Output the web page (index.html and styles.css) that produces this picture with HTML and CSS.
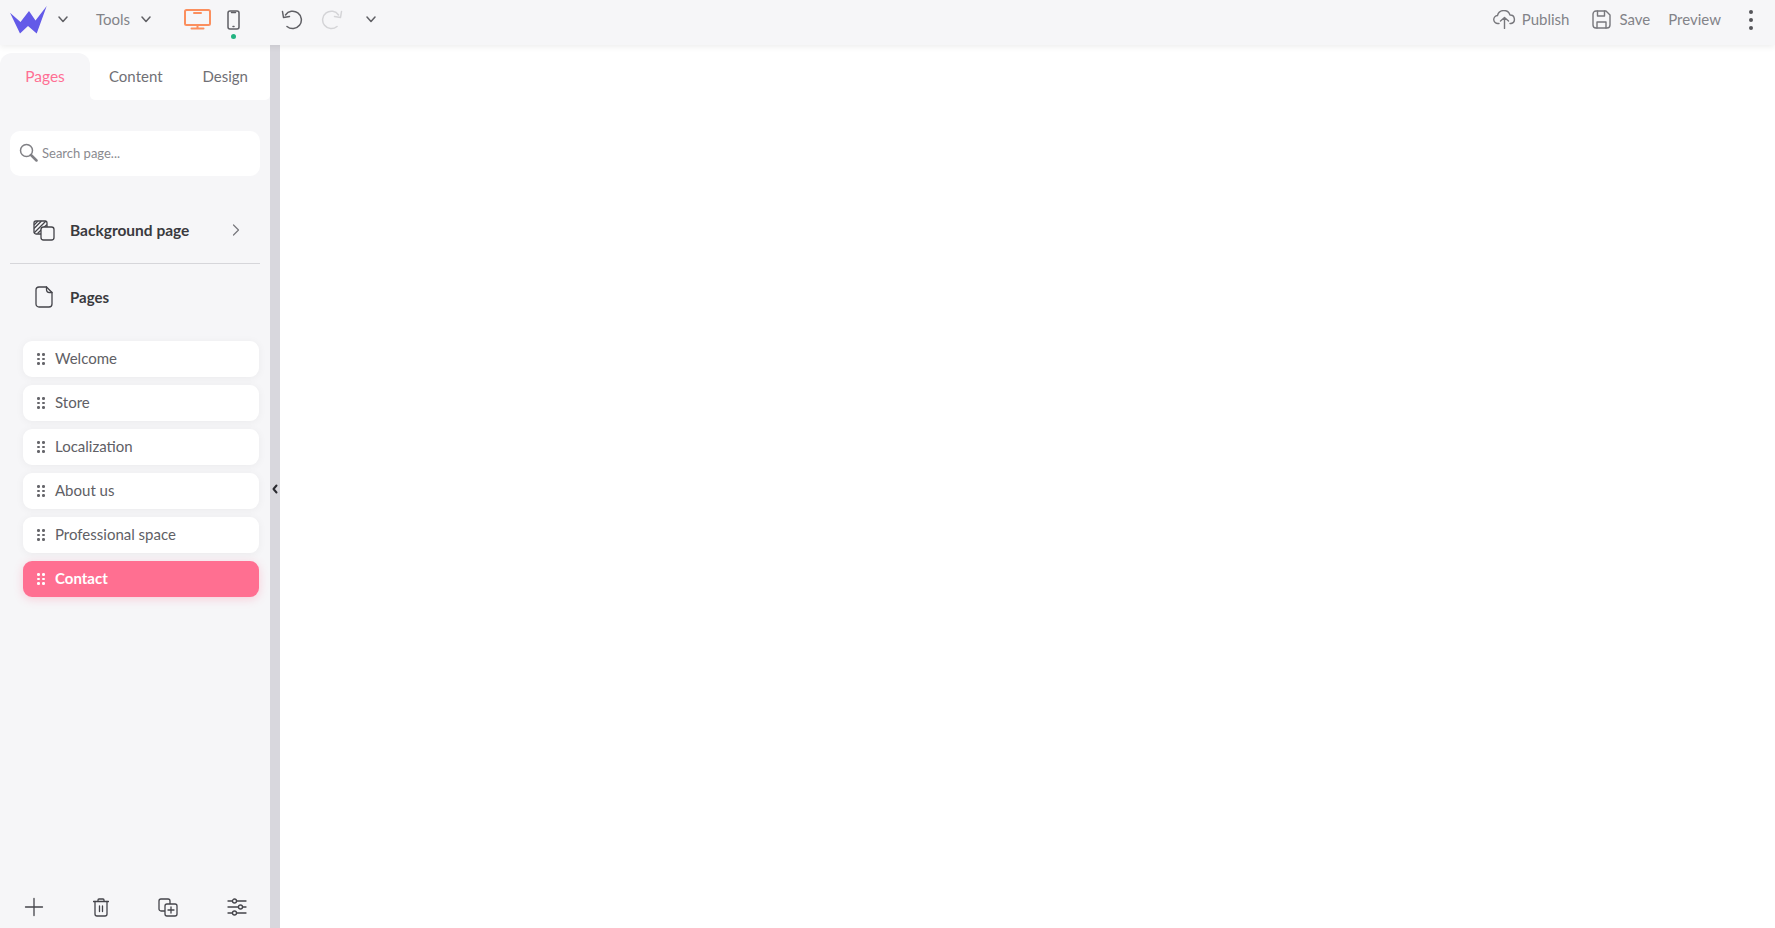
FILE: index.html
```html
<!DOCTYPE html>
<html lang="en">
<head>
<meta charset="utf-8">
<title>Editor</title>
<link rel="stylesheet" href="styles.css">
</head>
<body>
<header class="topbar">
  <div class="brand">
    <svg class="logo" width="38" height="28" viewBox="0 0 38 28"><path class="logo-fill" d="M0 6.700 L10.500 16 L19 5 L25.500 14.500 L36.700 0 L26.700 27.500 L18 20 L10 27.500 Z"/></svg>
    <svg class="chev" width="10" height="7" viewBox="0 0 10 7"><path d="M1 1 L5 5.500 L9 1"/></svg>
  </div>
  <div class="tools"><span class="bar-text">Tools</span><svg class="chev" width="10" height="7" viewBox="0 0 10 7"><path d="M1 1 L5 5.500 L9 1"/></svg></div>
  <div class="devices">
    <svg class="ic-desktop" width="27" height="21" viewBox="0 0 27 21"><rect x="1" y="1" width="25" height="15" rx="1.500"/><path d="M10 4h7M13.500 16v3.500M7.500 19.500h12"/></svg>
    <div class="phone">
      <svg class="ic-phone" width="13" height="20" viewBox="0 0 13 20"><rect x="1" y="1" width="11" height="18" rx="2"/><path d="M4.500 2.500h4M6 16.500h1"/></svg>
      <span class="dot"></span>
    </div>
  </div>
  <div class="history">
    <svg class="ic-undo" width="22" height="20" viewBox="0 0 22 20"><path d="M4.500 5 A8.700 8.700 0 1 1 6 16.500"/><path d="M1.500 1.500 L2.500 7.500 L8.500 6.500"/></svg>
    <svg class="ic-redo" width="22" height="20" viewBox="0 0 22 20"><path d="M17.500 5 A8.700 8.700 0 1 0 16 16.500"/><path d="M20.500 1.500 L19.500 7.500 L13.500 6.500"/></svg>
    <svg class="chev" width="10" height="7" viewBox="0 0 10 7"><path d="M1 1 L5 5.500 L9 1"/></svg>
  </div>
  <div class="actions">
    <div class="action action-publish">
      <svg class="ic-line" width="23" height="19" viewBox="0 0 23 19"><path d="M6 13.500 H5 A4 4 0 0 1 4.500 5.500 A6.500 6.500 0 0 1 17 5 A4.300 4.300 0 0 1 18 13.500 H17"/><path d="M11.500 18.500 V7.500 M7.500 11 L11.500 7.500 L15.500 11"/></svg>
      <span class="bar-text">Publish</span>
    </div>
    <div class="action action-save">
      <svg class="ic-line" width="19" height="19" viewBox="0 0 19 19"><path d="M4 1 H14 L18 5 V15 A3 3 0 0 1 15 18 H4 A3 3 0 0 1 1 15 V4 A3 3 0 0 1 4 1 Z"/><path d="M5.500 1 V6 H12.500 V1 M5 18 V12 H14 V18"/></svg>
      <span class="bar-text">Save</span>
    </div>
    <div class="action"><span class="bar-text">Preview</span></div>
    <div class="kebab"><i></i><i></i><i></i></div>
  </div>
</header>
<div class="main">
  <aside class="sidebar">
    <nav class="tabs">
      <div class="tab-slot"><div class="tab tab-active">Pages</div></div>
      <div class="tab-rest">
        <div class="tab">Content</div>
        <div class="tab">Design</div>
      </div>
    </nav>
    <div class="search">
      <svg class="ic-search" width="19" height="19" viewBox="0 0 19 19"><circle cx="7.500" cy="7.500" r="6"/><path class="thick" d="M12 12 L17.500 17.500"/></svg>
      <span>Search page...</span>
    </div>
    <div class="section section-bg">
      <svg class="ic-dark" width="22" height="21" viewBox="0 0 22 21"><path d="M8 14 H3 A2 2 0 0 1 1 12 V3 A2 2 0 0 1 3 1 H12 A2 2 0 0 1 14 3 V7"/><path d="M1.500 8 L8 1.500 M1.500 12.500 L12.500 1.500 M5 13 L13.500 5 M1.500 4.500 L4.500 1.500"/><rect x="8" y="7" width="13" height="13" rx="2.500" class="filled"/></svg>
      <span class="section-label">Background page</span>
      <svg class="chev-right" width="8" height="12" viewBox="0 0 8 12"><path d="M1.500 1 L6.500 6 L1.500 11"/></svg>
    </div>
    <div class="section section-pages">
      <svg class="ic-dark" width="18" height="22" viewBox="0 0 18 22"><path d="M4 1 H11.500 L17 6.500 V18 A3 3 0 0 1 14 21 H4 A3 3 0 0 1 1 18 V4 A3 3 0 0 1 4 1 Z"/><path d="M11.500 1 V3.500 A3 3 0 0 0 14.500 6.500 H17"/></svg>
      <span class="section-label">Pages</span>
    </div>
    <ul class="pages">
      <li class="page"><span class="grip"><i></i><i></i><i></i><i></i><i></i><i></i></span>Welcome</li>
      <li class="page"><span class="grip"><i></i><i></i><i></i><i></i><i></i><i></i></span>Store</li>
      <li class="page"><span class="grip"><i></i><i></i><i></i><i></i><i></i><i></i></span>Localization</li>
      <li class="page"><span class="grip"><i></i><i></i><i></i><i></i><i></i><i></i></span>About us</li>
      <li class="page"><span class="grip"><i></i><i></i><i></i><i></i><i></i><i></i></span>Professional space</li>
      <li class="page page-active"><span class="grip"><i></i><i></i><i></i><i></i><i></i><i></i></span>Contact</li>
    </ul>
    <div class="bottom">
      <svg class="ic-dark" width="20" height="20" viewBox="0 0 20 20"><path d="M10 1.500 V18.500 M1.500 10 H18.500"/></svg>
      <svg class="ic-dark" width="16" height="19" viewBox="0 0 16 19"><path d="M0.500 3.500 H15.500 M5 3.500 V2 A1 1 0 0 1 6 1 H10 A1 1 0 0 1 11 2 V3.500"/><path d="M2 3.500 V16 A2 2 0 0 0 4 18 H12 A2 2 0 0 0 14 16 V3.500"/><path d="M6.500 8 V13.500 M9.500 8 V13.500"/></svg>
      <svg class="ic-dark" width="20" height="19" viewBox="0 0 20 19"><path d="M6.500 13 H3 A2 2 0 0 1 1 11 V3 A2 2 0 0 1 3 1 H10 A2 2 0 0 1 12 3 V6"/><rect x="7" y="6" width="12" height="12" rx="2" class="filled"/><path d="M13 9 V15 M10 12 H16"/></svg>
      <svg class="ic-dark" width="20" height="18" viewBox="0 0 20 18"><path d="M1 3 H5.500 M9.500 3 H19 M1 9 H11.500 M15.500 9 H19 M1 15 H5.500 M9.500 15 H19"/><circle cx="7.500" cy="3" r="2"/><circle cx="13.500" cy="9" r="2"/><circle cx="7.500" cy="15" r="2"/></svg>
    </div>
  </aside>
  <div class="splitter"><svg class="split-arrow" width="6" height="10" viewBox="0 0 6 10"><path d="M4.500 1.500 L1.500 5 L4.500 8.500"/></svg></div>
  <main class="canvas"></main>
</div>
</body>
</html>
```

FILE: styles.css
```css
* { box-sizing: border-box; }
html, body { margin: 0; height: 928px; overflow: hidden; background: #fff; }
body { font-family: "Lato", "Open Sans", sans-serif; color: #55555a; font-size: 15px; }
svg { display: block; fill: none; stroke-linecap: round; stroke-linejoin: round; }

.topbar { position: relative; z-index: 2; height: 45px; background: #f6f6f8; box-shadow: 0 2px 6px rgba(0,0,0,.07); display: flex; align-items: center; padding: 0 0 6px 10px; color: #838388; }
.bar-text { padding-bottom: 2px; }
.brand { display: flex; align-items: center; gap: 10px; width: 86px; }
.logo-fill { fill: #635ae8; }
.chev path { stroke: #606065; stroke-width: 1.500; }
.tools { display: flex; align-items: center; gap: 11px; width: 88px; }
.devices { display: flex; align-items: center; gap: 16px; width: 97px; }
.ic-desktop { stroke: #fb8f5e; stroke-width: 2; }
.phone { position: relative; }
.ic-phone { stroke: #5f5f64; stroke-width: 1.500; }
.dot { position: absolute; left: 4px; top: 24px; width: 5px; height: 5px; border-radius: 50%; background: #22b381; }
.history { display: flex; align-items: center; gap: 18px; }
.ic-undo { stroke: #606065; stroke-width: 1.500; }
.ic-redo { stroke: #d4d4d7; stroke-width: 1.500; }
.history .chev { margin-left: 5px; }
.actions { margin-left: auto; display: flex; align-items: center; gap: 20px; padding-right: 22px; }
.action { display: flex; align-items: center; gap: 6px; }
.action-publish { margin-right: 3px; }
.action-save { gap: 8px; margin-right: -2px; }
.ic-line { stroke: #77777c; stroke-width: 1.400; }
.kebab { display: flex; flex-direction: column; gap: 4px; margin-left: 8px; }
.kebab i { width: 4px; height: 4px; border-radius: 50%; background: #55555a; }

.main { display: flex; height: 883px; }
.sidebar { width: 270px; background: #f6f6f8; display: flex; flex-direction: column; }
.tabs { display: flex; height: 55px; }
.tab-slot { width: 90px; padding-top: 8px; background: #fff; display: flex; }
.tab { display: flex; align-items: center; justify-content: center; padding-top: 6px; font-size: 15px; color: #707075; }
.tab-active { flex: 1; padding-top: 0; padding-bottom: 2px; background: #f6f6f8; color: #ff6f94; font-size: 15.500px; border-radius: 12px 12px 0 0; }
.tab-rest { flex: 1; display: flex; background: #fff; justify-content: space-between; padding: 0 22px 0 19px; border-radius: 0 0 5px 5px; }
.search { margin: 31px 10px 0; height: 45px; background: #fff; border-radius: 10px; display: flex; align-items: center; padding: 0 0 2px 9px; gap: 4px; font-size: 13px; color: #8a8a8f; }
.ic-search circle { stroke: #808085; stroke-width: 1.500; }
.ic-search .thick { stroke: #808085; stroke-width: 2.500; }
.section { display: flex; align-items: center; padding-left: 33px; }
.section svg:first-child { margin-right: 13px; }
.section-bg { margin: 30px 10px 0; padding: 0 0 9px 23px; height: 58px; border-bottom: 1px solid #d6d6da; }
.section-bg svg:first-child { margin-right: 15px; }
.section-pages { height: 66px; }
.section-pages svg:first-child { margin-right: 17px; margin-left: 2px; }
.section-label { font-weight: 700; font-size: 15px; color: #3a3a3e; }
.section-bg .section-label { flex: 1; font-size: 15.500px; }
.chev-right { margin-right: 20px; }
.chev-right path { stroke: #77777c; stroke-width: 1.200; }
.ic-dark { stroke: #44444a; stroke-width: 1.300; }
.filled { fill: #f6f6f8; }

.pages { list-style: none; margin: 11px 0 0; padding: 0 11px 0 23px; display: flex; flex-direction: column; gap: 8px; }
.page { height: 36px; background: #fff; border-radius: 9px; display: flex; align-items: center; padding: 0 0 2px 14px; box-shadow: 0 1px 8px rgba(0,0,0,.05); color: #606065; font-size: 15px; }
.grip { display: grid; grid-template-columns: 3px 3px; gap: 2px 2px; width: 18px; margin-top: 2px; }
.grip i { width: 2.500px; height: 2.500px; background: #66666b; border-radius: 50%; }
.page-active { background: #ff6f91; color: #fff; font-weight: 700; box-shadow: 0 2px 10px rgba(255,111,145,.3); }
.page-active .grip i { background: #fff; }

.bottom { margin-top: auto; display: flex; align-items: center; justify-content: space-between; padding: 0 23px 0 24px; height: 42px; }

.splitter { width: 10px; background: #d8d7dd; display: flex; align-items: center; justify-content: center; padding-top: 4px; }
.split-arrow { stroke: #2a2a30; stroke-width: 2; }
.canvas { flex: 1; background: #fff; }
```
